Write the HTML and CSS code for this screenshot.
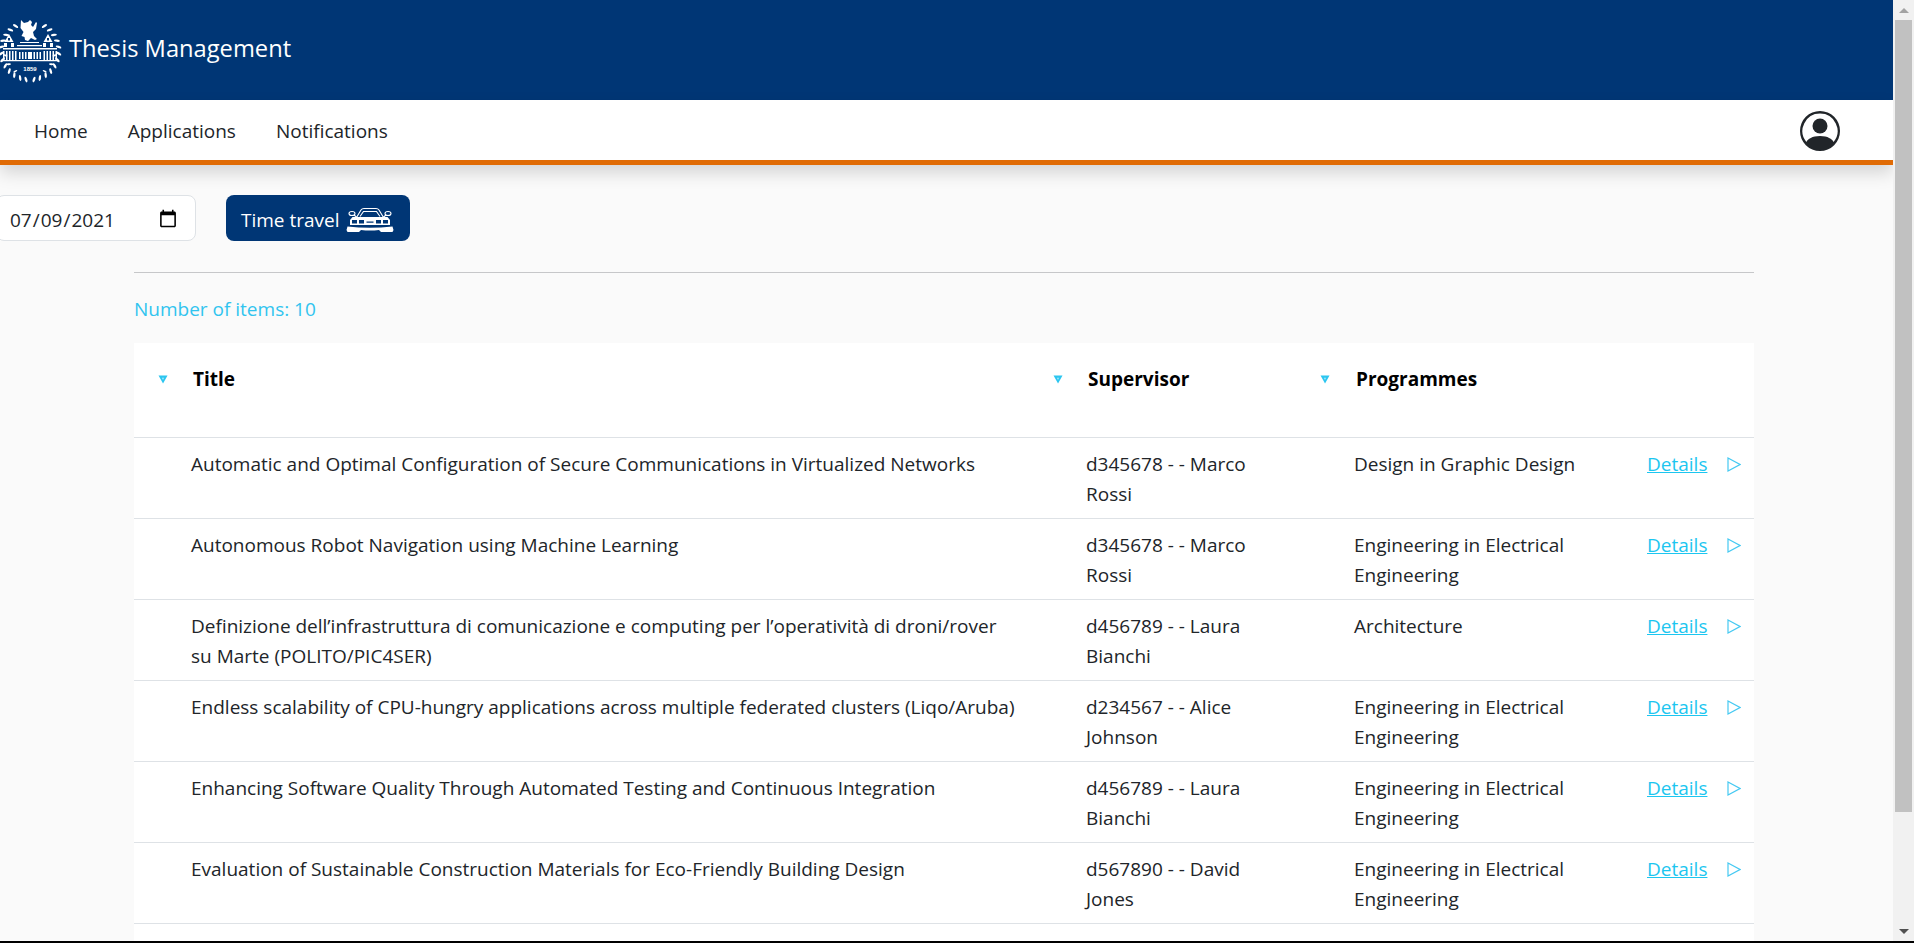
FILE: index.html
```html
<!DOCTYPE html>
<html lang="en">
<head>
<meta charset="utf-8">
<title>Thesis Management</title>
<link rel="stylesheet" href="styles.css">
</head>
<body>
<div class="window">
  <div class="page">
    <header class="brand">
      <svg class="logo" viewBox="0 0 64 64" aria-hidden="true">
        <defs>
          <ellipse id="leaf" cx="32" cy="3.200" rx="1.200" ry="3" transform="rotate(28 32 3.200)"/>
          <ellipse id="leaf2" cx="32" cy="3.200" rx="1.200" ry="3" transform="rotate(-28 32 3.200)"/>
          <ellipse id="leafin" cx="32" cy="7" rx=".9" ry="2.200" transform="rotate(-28 32 7)"/>
          <ellipse id="leafin2" cx="32" cy="7" rx=".9" ry="2.200" transform="rotate(28 32 7)"/>
        </defs>
        <g fill="#fff">
          <use href="#leaf" transform="rotate(30 32 32)"/><use href="#leaf" transform="rotate(43 32 32)"/><use href="#leaf" transform="rotate(56 32 32)"/><use href="#leaf" transform="rotate(69 32 32)"/><use href="#leaf" transform="rotate(82 32 32)"/><use href="#leaf" transform="rotate(95 32 32)"/><use href="#leaf" transform="rotate(108 32 32)"/><use href="#leaf" transform="rotate(121 32 32)"/><use href="#leaf" transform="rotate(134 32 32)"/><use href="#leaf" transform="rotate(147 32 32)"/><use href="#leaf" transform="rotate(160 32 32)"/><use href="#leaf" transform="rotate(172 32 32)"/>
          <use href="#leaf2" transform="rotate(-30 32 32)"/><use href="#leaf2" transform="rotate(-43 32 32)"/><use href="#leaf2" transform="rotate(-56 32 32)"/><use href="#leaf2" transform="rotate(-69 32 32)"/><use href="#leaf2" transform="rotate(-82 32 32)"/><use href="#leaf2" transform="rotate(-95 32 32)"/><use href="#leaf2" transform="rotate(-108 32 32)"/><use href="#leaf2" transform="rotate(-121 32 32)"/><use href="#leaf2" transform="rotate(-134 32 32)"/><use href="#leaf2" transform="rotate(-147 32 32)"/><use href="#leaf2" transform="rotate(-160 32 32)"/><use href="#leaf2" transform="rotate(-172 32 32)"/>
          <use href="#leafin" transform="rotate(100 32 32)"/><use href="#leafin" transform="rotate(122 32 32)"/><use href="#leafin" transform="rotate(144 32 32)"/>
          <use href="#leafin2" transform="rotate(-100 32 32)"/><use href="#leafin2" transform="rotate(-122 32 32)"/><use href="#leafin2" transform="rotate(-144 32 32)"/>
          <path d="M23 1l3 3 4-1 2-2 2 2-1 3 2 2 3-5 1 1-1 6-3 3 1 4 3 3-2 1-4-2-3 3-3-1-.5-3-3-1 2-4-3-4z"/>
          <path d="M11 15l4.500 8h-9zM50 15l4.500 8h-9z"/>
          <path class="logo-cut" d="M10 19h2v2.500h-2zM49 19h2v2.500h-2z"/>
          <path d="M6 24h3v4H6zM13 24h3v4h-3zM45 24h3v4h-3zM52 24h3v4h-3zM19 26h25v1.200H19zM22 23h19v1H22z"/>
          <path d="M5 29h54v1.400H5z"/>
          <path d="M5 32h1.500v9H5zM8 32h1.500v9H8zM11 32h1.500v9H11zM14 32h1.500v9H14zM17 32h1.500v9H17zM21 33h1.500v7H21zM24 33h1.500v7H24zM27 33h1.500v7H27zM30 33h4v7h-4zM35.500 33H37v7h-1.500zM38.500 33H40v7h-1.500zM41.500 33H43v7h-1.500zM45.500 32H47v9h-1.500zM48.500 32H50v9h-1.500zM51.500 32H53v9h-1.500zM54.500 32H56v9h-1.500zM57.500 32H59v9h-1.500z"/>
          <path d="M4 41h56v1.200H4z"/>
          <text x="32" y="52" class="logo-year">1859</text>
        </g>
      </svg>
      <span class="brand-name">Thesis Management</span>
    </header>
    <nav class="nav">
      <a class="nav-link" href="#">Home</a>
      <a class="nav-link" href="#">Applications</a>
      <a class="nav-link" href="#">Notifications</a>
      <svg class="user" viewBox="0 0 16 16" aria-hidden="true">
        <path d="M11 6a3 3 0 1 1-6 0 3 3 0 0 1 6 0z"/>
        <path fill-rule="evenodd" d="M0 8a8 8 0 1 1 16 0A8 8 0 0 1 0 8zm8-7a7 7 0 0 0-5.468 11.37C3.242 11.226 4.805 10 8 10s4.757 1.225 5.468 2.37A7 7 0 0 0 8 1z"/>
      </svg>
    </nav>
    <main class="content">
      <div class="toolbar">
        <input class="date" type="date" value="2021-07-09">
        <button class="travel" type="button"><span class="travel-label">Time travel</span>
          <svg class="car" viewBox="0 0 48 26" aria-hidden="true">
            <path class="car-line" d="M10.500 10.500l4.500-7.500q1-1.500 3-1.500h12q2 0 3 1.500l4.500 7.500"/>
            <path class="car-line" d="M14 9.500l3.500-5h13l3.500 5"/>
            <ellipse class="car-line" cx="6" cy="6.500" rx="3" ry="2"/>
            <ellipse class="car-line" cx="42" cy="6.500" rx="3" ry="2"/>
            <path class="car-line" d="M8 8l3 2.500M40 8l-3 2.500"/>
            <path class="car-fill" d="M6.500 10h35l2.500 3v5H4v-5z"/>
            <path class="car-cut" d="M6 13h5v3.500H6zM13 13h5v3.500h-5zM30 13h5v3.500h-5zM37 13h5v3.500h-5zM20.500 14.500h7v1.200h-7z"/>
            <path class="car-fill" d="M1.500 19.500q22 2.500 45 0l1 3.500-1 2H35l-2-2q-9 1-18 0l-2 2H1.500l-1-2z"/>
          </svg>
        </button>
      </div>
      <div class="list">
        <hr class="rule">
        <p class="count">Number of items: 10</p>
        <table class="theses">
          <colgroup>
            <col class="c-sort-a"><col class="c-title"><col class="c-sort-b"><col class="c-sup"><col class="c-sort"><col class="c-prog"><col class="c-link"><col class="c-go">
          </colgroup>
          <thead>
            <tr>
              <th class="sort-cell sort-first"><svg class="sort" viewBox="0 0 10 9"><path d="M.5.500h9L5 8.500z"/><path class="sort-hole" d="M3.800 2.800h2.400L5 5z"/></svg></th>
              <th class="head">Title</th>
              <th class="sort-cell"><svg class="sort" viewBox="0 0 10 9"><path d="M.5.500h9L5 8.500z"/><path class="sort-hole" d="M3.800 2.800h2.400L5 5z"/></svg></th>
              <th class="head">Supervisor</th>
              <th class="sort-cell"><svg class="sort" viewBox="0 0 10 9"><path d="M.5.500h9L5 8.500z"/><path class="sort-hole" d="M3.800 2.800h2.400L5 5z"/></svg></th>
              <th class="head">Programmes</th>
              <th class="head"></th>
              <th class="head"></th>
            </tr>
          </thead>
          <tbody>
            <tr>
              <td></td><td>Automatic and Optimal Configuration of Secure Communications in Virtualized Networks</td>
              <td></td><td>d345678 - - Marco Rossi</td>
              <td></td><td>Design in Graphic Design</td>
              <td><a class="details" href="#">Details</a></td>
              <td><svg class="go" viewBox="0 0 14 15"><path d="M1 1l12 6.500L1 14z"/></svg></td>
            </tr>
            <tr>
              <td></td><td>Autonomous Robot Navigation using Machine Learning</td>
              <td></td><td>d345678 - - Marco Rossi</td>
              <td></td><td>Engineering in Electrical Engineering</td>
              <td><a class="details" href="#">Details</a></td>
              <td><svg class="go" viewBox="0 0 14 15"><path d="M1 1l12 6.500L1 14z"/></svg></td>
            </tr>
            <tr>
              <td></td><td>Definizione dell’infrastruttura di comunicazione e computing per l’operatività di droni/rover su Marte (POLITO/PIC4SER)</td>
              <td></td><td>d456789 - - Laura Bianchi</td>
              <td></td><td>Architecture</td>
              <td><a class="details" href="#">Details</a></td>
              <td><svg class="go" viewBox="0 0 14 15"><path d="M1 1l12 6.500L1 14z"/></svg></td>
            </tr>
            <tr>
              <td></td><td>Endless scalability of CPU-hungry applications across multiple federated clusters (Liqo/Aruba)</td>
              <td></td><td>d234567 - - Alice Johnson</td>
              <td></td><td>Engineering in Electrical Engineering</td>
              <td><a class="details" href="#">Details</a></td>
              <td><svg class="go" viewBox="0 0 14 15"><path d="M1 1l12 6.500L1 14z"/></svg></td>
            </tr>
            <tr>
              <td></td><td>Enhancing Software Quality Through Automated Testing and Continuous Integration</td>
              <td></td><td>d456789 - - Laura Bianchi</td>
              <td></td><td>Engineering in Electrical Engineering</td>
              <td><a class="details" href="#">Details</a></td>
              <td><svg class="go" viewBox="0 0 14 15"><path d="M1 1l12 6.500L1 14z"/></svg></td>
            </tr>
            <tr>
              <td></td><td>Evaluation of Sustainable Construction Materials for Eco-Friendly Building Design</td>
              <td></td><td>d567890 - - David Jones</td>
              <td></td><td>Engineering in Electrical Engineering</td>
              <td><a class="details" href="#">Details</a></td>
              <td><svg class="go" viewBox="0 0 14 15"><path d="M1 1l12 6.500L1 14z"/></svg></td>
            </tr>
            <tr class="blank"><td colspan="8"></td></tr>
          </tbody>
        </table>
      </div>
    </main>
  </div>
  <aside class="scrollbar" aria-hidden="true">
    <div class="sb-btn"><span class="sb-up"></span></div>
    <div class="sb-track"><div class="sb-thumb"></div></div>
    <div class="sb-btn"><span class="sb-down"></span></div>
  </aside>
</div>
</body>
</html>
```
FILE: styles.css
```css
* { box-sizing: border-box; }
html, body { margin: 0; height: 100%; overflow: hidden; background: #000; }
body { font-family: "Open Sans", "Noto Sans", sans-serif; font-size: 19px; line-height: 30px; color: #212529; }

.window { display: flex; height: 941px; overflow: hidden; background: #fafafa; }
.page { width: 1893px; flex: none; height: 941px; overflow: hidden; }

.brand { height: 100px; background: #003675; color: #fff; display: flex; align-items: center; gap: 7px; }
.logo { width: 64px; height: 64px; flex: none; margin-left: -2px; margin-top: 1px; display: block; }
.logo-cut { fill: #003675; }
.logo-year { font-family: "Liberation Sans", sans-serif; font-size: 6px; font-weight: 700; text-anchor: middle; }
.brand-name { font-size: 23.700px; margin-top: -5px; }

.nav { height: 65px; background: #fff; border-bottom: 5px solid #e06b05; box-shadow: 0 8px 16px rgba(0,0,0,.15); display: flex; align-items: center; padding: 0 53px 0 14px; position: relative; }
.nav-link { color: #212529; text-decoration: none; padding: 1px 20px 0; }
.user { width: 40px; height: 40px; margin-left: auto; margin-top: 2px; fill: #212529; display: block; }

.toolbar { display: flex; align-items: center; gap: 30px; margin: 30px 0 0 -4px; }
.date { width: 200px; height: 46px; border: 1px solid #dee2e6; border-radius: 8px; background: #fff; padding: 3px 17px 0 12px; font: inherit; color: #212529; }
.date::-webkit-calendar-picker-indicator { width: 20px; height: 22px; padding: 0; margin: 0; background-size: contain; }
.travel { height: 46px; width: 184px; background: #003675; color: #fff; border: 0; border-radius: 8px; font: inherit; display: flex; align-items: center; gap: 6px; padding: 0 15px; }
.travel-label { padding-top: 3px; white-space: nowrap; flex: none; }
.car { width: 48px; height: 26px; flex: none; margin-top: 3px; }
.car-line { fill: none; stroke: #fff; stroke-width: 1.100; }
.car-fill { fill: #fff; }
.car-cut { fill: #003675; }

.list { margin: 31px 139px 0 134px; }
.rule { margin: 0; border: 0; border-top: 1px solid #c6c7c9; }
.count { margin: 21px 0 0; color: #31c4ef; line-height: 30px; height: 49px; }

.theses { width: 1620px; table-layout: fixed; border-collapse: collapse; background: #fff; }
.c-sort-a { width: 57px; }
.c-title { width: 852px; }
.c-sort-b { width: 43px; }
.c-sort { width: 44px; }
.c-sup { width: 224px; }
.c-prog { width: 269px; }
.c-link { width: 105px; }
.c-go { width: 26px; }

th { font-weight: 700; color: #000; text-align: left; vertical-align: top; height: 94px; padding: 21px 0 0; }
th.head { padding-left: 2px; }
.sort-cell { padding-left: 10px; }
.sort-first { padding-left: 24px; }
.sort { width: 10px; height: 9px; fill: #2cc6f0; display: block; margin-top: 11px; }
.sort-hole { fill: #a8e6f8; }

td { border-top: 1px solid #dee2e6; padding: 11px 0 9px; vertical-align: top; height: 81px; }
td:nth-child(2) { padding-right: 27px; }
td:nth-child(4) { padding-right: 24px; }
td:nth-child(7) { padding-left: 24px; }
.details { color: #1cc6f0; text-decoration: underline; }
.go { width: 14px; height: 15px; display: block; margin: 8px 0 0 -1px; fill: none; stroke: #45c9f2; stroke-width: 1.200; }

.scrollbar { width: 21px; flex: none; background: #f1f1f1; display: flex; flex-direction: column; }
.sb-btn { height: 20px; flex: none; display: flex; align-items: center; justify-content: center; padding-left: 1px; }
.sb-up { width: 0; height: 0; border: 5px solid transparent; border-top: 0; border-bottom: 5px solid #a3a3a3; }
.sb-down { width: 0; height: 0; border: 5px solid transparent; border-bottom: 0; border-top: 5px solid #505050; }
.sb-track { flex: 1; padding: 0 2px; }
.sb-thumb { height: 792px; background: #c1c1c1; }
```
